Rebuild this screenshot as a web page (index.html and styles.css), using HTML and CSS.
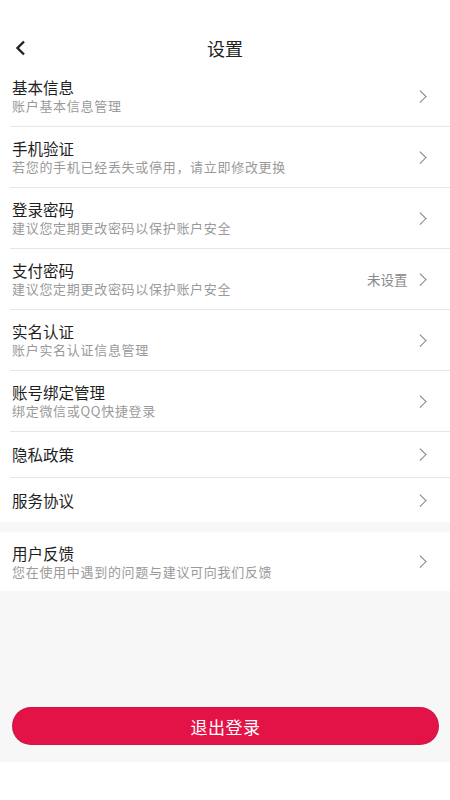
FILE: index.html
```html
<!DOCTYPE html>
<html lang="zh-CN">
<head>
<meta charset="utf-8">
<title>设置</title>
<link rel="stylesheet" href="styles.css">
</head>
<body>
<div class="page">
  <header class="header">
    <svg class="back" viewBox="0 0 14 16" width="14" height="16"><path d="M10 1.5 L3.5 8 L10 14.5" fill="none" stroke="#222" stroke-width="2.4" stroke-linejoin="miter"/></svg>
    <h1 class="title">设置</h1>
  </header>

  <section class="group">
    <div class="row two">
      <div class="text"><div class="name">基本信息</div><div class="desc">账户基本信息管理</div></div>
      <span class="chev"></span>
    </div>
    <div class="row two">
      <div class="text"><div class="name">手机验证</div><div class="desc">若您的手机已经丢失或停用，请立即修改更换</div></div>
      <span class="chev"></span>
    </div>
    <div class="row two">
      <div class="text"><div class="name">登录密码</div><div class="desc">建议您定期更改密码以保护账户安全</div></div>
      <span class="chev"></span>
    </div>
    <div class="row two">
      <div class="text"><div class="name">支付密码</div><div class="desc">建议您定期更改密码以保护账户安全</div></div>
      <span class="status">未设置</span><span class="chev"></span>
    </div>
    <div class="row two">
      <div class="text"><div class="name">实名认证</div><div class="desc">账户实名认证信息管理</div></div>
      <span class="chev"></span>
    </div>
    <div class="row two">
      <div class="text"><div class="name">账号绑定管理</div><div class="desc">绑定微信或QQ快捷登录</div></div>
      <span class="chev"></span>
    </div>
    <div class="row one">
      <div class="text"><div class="name">隐私政策</div></div>
      <span class="chev"></span>
    </div>
    <div class="row one last">
      <div class="text"><div class="name">服务协议</div></div>
      <span class="chev"></span>
    </div>
  </section>

  <section class="group second">
    <div class="row two last">
      <div class="text"><div class="name">用户反馈</div><div class="desc">您在使用中遇到的问题与建议可向我们反馈</div></div>
      <span class="chev"></span>
    </div>
  </section>

  <div class="bottom">
    <button class="logout">退出登录</button>
  </div>
</div>
</body>
</html>
```

FILE: styles.css
```css
* { box-sizing: border-box; }
html, body { margin: 0; padding: 0; background: #ffffff; }
body { font-family: "Noto Sans CJK SC", "Noto Sans", sans-serif; color: #222; }
.page { width: 450px; display: flex; flex-direction: column; background: #f7f7f8; }

.header {
  height: 66px;
  padding-top: 30px;
  position: relative;
  display: flex;
  align-items: center;
  justify-content: center;
  background: #fff;
}
.back { position: absolute; left: 14px; top: 40px; }
.title { margin: 0; font-size: 18px; font-weight: 400; color: #222; line-height: 36px; }

.group { background: #fff; }
.second { margin-top: 10px; }
.row {
  margin-left: 10px;
  padding: 0 26px 0 2px;
  display: flex;
  align-items: center;
  border-bottom: 1px solid #e6e6e6;
}
.row.last { border-bottom: none; }
.row.two { height: 61px; }
.row.one { height: 46px; }
.group > .row.last.one { height: 44px; }
.second .row.two { height: 59px; }
.text { flex: 1; display: flex; flex-direction: column; }
.name { font-size: 15.5px; line-height: 19px; color: #1e1e1e; }
.desc { font-size: 13px; line-height: 17px; color: #9a9a9a; letter-spacing: 0.7px; }
.status { font-size: 13.5px; color: #8a8a8a; margin-right: 8px; }
.chev {
  width: 8.5px; height: 8.5px;
  border-top: 1.6px solid #808080;
  border-right: 1.6px solid #808080;
  transform: rotate(45deg);
}

.bottom {
  background: #f7f7f8;
  height: 171px;
  display: flex;
  align-items: flex-end;
  padding: 0 12px 18px 13px;
}
.logout {
  width: 100%;
  height: 36px;
  border: none;
  border-radius: 18px;
  background: #e31347;
  color: #fff;
  font-family: "Noto Sans CJK SC", sans-serif;
  font-size: 17px;
  letter-spacing: 0.5px;
  box-shadow: 0 0 0 1px #c81a44;
}
```
